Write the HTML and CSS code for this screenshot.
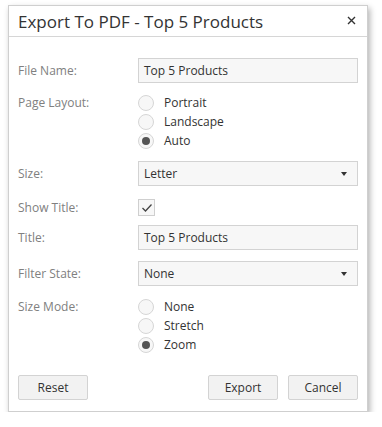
FILE: index.html
```html
<!DOCTYPE html>
<html lang="en">
<head>
    <meta charset="UTF-8">
    <meta name="viewport" content="width=device-width, initial-scale=1.0">
    <title>Export To PDF</title>
    <link rel="stylesheet" href="styles.css">
</head>
<body>
    <div class="dialog">
        <div class="dialog-header">
            <h2>Export To PDF - Top 5 Products</h2>
            <span class="close">
                <svg width="9" height="9" viewBox="0 0 9 9"><path d="M1 1 L8 8 M8 1 L1 8" stroke="#333" stroke-width="1.4" fill="none"/></svg>
            </span>
        </div>
        <div class="dialog-body">
            <div class="row">
                <label class="label">File Name:</label>
                <div class="field"><div class="input">Top 5 Products</div></div>
            </div>
            <div class="row row-top row-radios">
                <label class="label">Page Layout:</label>
                <div class="field radio-group">
                    <div class="radio"><span class="dot"></span>Portrait</div>
                    <div class="radio"><span class="dot"></span>Landscape</div>
                    <div class="radio checked"><span class="dot"></span>Auto</div>
                </div>
            </div>
            <div class="row">
                <label class="label">Size:</label>
                <div class="field"><div class="input select">Letter<span class="arrow"></span></div></div>
            </div>
            <div class="row row-check">
                <label class="label">Show Title:</label>
                <div class="field">
                    <span class="checkbox">
                        <svg width="12" height="10" viewBox="0 0 12 10"><path d="M1.5 5 L4.5 8 L10.5 1.5" stroke="#444" stroke-width="1.3" fill="none"/></svg>
                    </span>
                </div>
            </div>
            <div class="row row-after-check">
                <label class="label">Title:</label>
                <div class="field"><div class="input">Top 5 Products</div></div>
            </div>
            <div class="row">
                <label class="label">Filter State:</label>
                <div class="field"><div class="input select">None<span class="arrow"></span></div></div>
            </div>
            <div class="row row-top row-radios">
                <label class="label">Size Mode:</label>
                <div class="field radio-group">
                    <div class="radio"><span class="dot"></span>None</div>
                    <div class="radio"><span class="dot"></span>Stretch</div>
                    <div class="radio checked"><span class="dot"></span>Zoom</div>
                </div>
            </div>
        </div>
        <div class="dialog-footer">
            <button>Reset</button>
            <div class="footer-right">
                <button>Export</button>
                <button>Cancel</button>
            </div>
        </div>
    </div>
</body>
</html>
```

FILE: styles.css
```css
body {
    margin: 0;
    padding: 5px 0 0 8px;
    background-color: #fff;
    font-family: "Open Sans", "DejaVu Sans", sans-serif;
    font-size: 12px;
    color: #333;
}

.dialog {
    width: 358px;
    border: 1px solid #cfcfcf;
    background-color: #fff;
    box-shadow: 2px 3px 6px rgba(0, 0, 0, 0.3);
}

.dialog-header {
    height: 30px;
    border-bottom: 1px solid #d6d6d6;
    display: flex;
    align-items: center;
    justify-content: space-between;
    padding: 0 11px 0 9px;
}

.dialog-header h2 {
    margin: 0;
    font-size: 17px;
    font-weight: normal;
    color: #333;
}

.close {
    display: flex;
    margin-top: -2px;
}

.dialog-body {
    padding: 21px 9px 0 9px;
}

.row {
    display: flex;
    align-items: center;
    margin-top: 11px;
}

.row:first-child {
    margin-top: 0;
}

.row-top {
    align-items: flex-start;
}

.row-radios:nth-child(2) {
    margin-top: 10px;
}

.row-check {
    margin-top: 12px;
}

.row-after-check {
    margin-top: 8px;
}

.label {
    width: 120px;
    color: #808080;
    line-height: 19px;
}

.field {
    width: 220px;
}

.input {
    height: 23px;
    line-height: 23px;
    border: 1px solid #d3d3d3;
    background-color: #f7f7f7;
    padding: 0 5px;
    position: relative;
}

.arrow {
    position: absolute;
    right: 10px;
    top: 10px;
    border-left: 3.5px solid transparent;
    border-right: 3.5px solid transparent;
    border-top: 4px solid #333;
}

.radio {
    display: flex;
    align-items: center;
    height: 19px;
}

.dot {
    width: 14px;
    height: 14px;
    border: 1px solid #d6d6d6;
    border-radius: 50%;
    background-color: #f7f7f7;
    margin-right: 10px;
    display: flex;
    align-items: center;
    justify-content: center;
}

.radio.checked .dot::after {
    content: "";
    width: 8px;
    height: 8px;
    border-radius: 50%;
    background-color: #555;
}

.checkbox {
    width: 15px;
    height: 15px;
    border: 1px solid #cfcfcf;
    background-color: #f7f7f7;
    display: flex;
    align-items: center;
    justify-content: center;
}

.dialog-footer {
    display: flex;
    justify-content: space-between;
    padding: 21px 9px 11px 9px;
}

.footer-right {
    display: flex;
    gap: 10px;
}

button {
    width: 70px;
    height: 25px;
    border: 1px solid #d3d3d3;
    border-radius: 2px;
    background-color: #f2f2f2;
    font-family: "Open Sans", "DejaVu Sans", sans-serif;
    font-size: 12px;
    color: #333;
    padding: 0;
}
```
